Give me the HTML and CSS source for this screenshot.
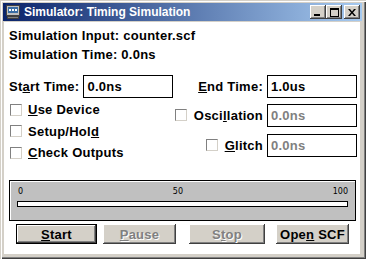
FILE: index.html
```html
<!DOCTYPE html>
<html lang="en">
<head>
    <meta charset="UTF-8">
    <title>Simulator: Timing Simulation</title>
    <link rel="stylesheet" href="styles.css">
</head>
<body>
    <div class="window">
        <div class="titlebar">
            <svg class="app-icon" width="16" height="16" viewBox="0 0 16 16">
                <rect x="1.5" y="1.5" width="13" height="10" fill="#c0c0c0" stroke="#404040"/>
                <rect x="3" y="3" width="10" height="6" fill="#3a6ea5"/>
                <rect x="4" y="5" width="2" height="2" fill="#fff"/>
                <rect x="7" y="5" width="2" height="2" fill="#fff"/>
                <rect x="10" y="5" width="2" height="2" fill="#fff"/>
                <rect x="2.5" y="12.5" width="11" height="2" fill="#808080" stroke="#404040"/>
            </svg>
            <span class="title">Simulator: Timing Simulation</span>
            <div class="caption-btns">
                <span class="cap-btn"><svg width="8" height="7"><rect x="0" y="5" width="6" height="2" fill="#000"/></svg></span>
                <span class="cap-btn"><svg width="9" height="9"><rect x="0.5" y="0.5" width="8" height="8" fill="none" stroke="#000"/><rect x="0" y="0" width="9" height="2" fill="#000"/></svg></span>
                <span class="cap-btn close-btn"><svg width="8" height="7"><path d="M0 0h2l2 2.5L6 0h2L5 3.5 8 7H6L4 4.5 2 7H0l3-3.5z" fill="#000"/></svg></span>
            </div>
        </div>

        <div class="client">
            <p class="info">Simulation Input: counter.scf</p>
            <p class="info">Simulation Time: 0.0ns</p>

            <div class="time-row">
                <label class="field">St<u>a</u>rt Time: <span class="box">0.0ns</span></label>
                <label class="field"><u>E</u>nd Time: <span class="box">1.0us</span></label>
            </div>

            <div class="options">
                <div class="opt-left">
                    <label class="check"><span class="cb"></span><u>U</u>se Device</label>
                    <label class="check"><span class="cb"></span>Setup/Hol<u>d</u></label>
                    <label class="check"><span class="cb"></span><u>C</u>heck Outputs</label>
                </div>
                <div class="opt-right">
                    <label class="check"><span class="cb"></span>Osci<u>l</u>lation <span class="box disabled">0.0ns</span></label>
                    <label class="check"><span class="cb"></span><u>G</u>litch <span class="box disabled">0.0ns</span></label>
                </div>
            </div>

            <div class="progress-group">
                <div class="scale">
                    <span>0</span>
                    <span>50</span>
                    <span>100</span>
                </div>
                <div class="bar"></div>
            </div>

            <div class="buttons">
                <button class="btn default btn-start"><u>S</u>tart</button>
                <button class="btn btn-pause" disabled><u>P</u>ause</button>
                <button class="btn btn-stop" disabled>S<u>t</u>op</button>
                <button class="btn btn-open">Ope<u>n</u> SCF</button>
            </div>
        </div>
    </div>
</body>
</html>
```
FILE: styles.css
```css
body {
    margin: 0;
    background-color: #d4d0c8;
    font-family: "Liberation Sans", Arial, sans-serif;
    font-size: 13px;
    font-weight: bold;
    letter-spacing: 0.25px;
}

.window {
    width: 366px;
    height: 259px;
    box-sizing: border-box;
    padding: 3px 4px 5px 3px;
    display: flex;
    flex-direction: column;
    background-color: #d4d0c8;
    box-shadow: inset 1px 1px #d4d0c8, inset 2px 2px #fff, inset -1px -1px #404040, inset -2px -2px #808080;
}

.titlebar {
    height: 18px;
    display: flex;
    align-items: center;
    padding: 0 2px 0 2px;
    background: linear-gradient(to right, #0a246a, #a6caf0);
    color: #fff;
}

.app-icon {
    margin-right: 3px;
}

.title {
    font-size: 12px;
    letter-spacing: 0;
}

.caption-btns {
    margin-left: auto;
    display: flex;
}

.cap-btn {
    width: 16px;
    height: 14px;
    display: flex;
    align-items: center;
    justify-content: center;
    background-color: #d4d0c8;
    box-shadow: inset -1px -1px #404040, inset 1px 1px #fff, inset -2px -2px #808080;
}

.close-btn {
    margin-left: 2px;
}

.client {
    flex: 1;
    margin: 1px 2px 0 1px;
    padding: 0 0 0 5px;
    background-color: #fff;
}

.info {
    margin: 0;
    height: 19px;
    line-height: 19px;
}

.info:first-child {
    margin-top: 4px;
}

.time-row {
    margin-top: 11px;
    display: flex;
    justify-content: space-between;
    padding-right: 3px;
}

.field {
    display: flex;
    align-items: center;
}

.box {
    width: 90px;
    height: 23px;
    box-sizing: border-box;
    border: 1px solid #000;
    padding: 0 3px;
    margin-left: 4px;
    line-height: 21px;
    color: #000;
    background-color: #fff;
}

.box.disabled {
    color: #808080;
}

.options {
    display: flex;
    justify-content: space-between;
    padding-right: 3px;
}

.opt-left {
    display: flex;
    flex-direction: column;
    padding-top: 5px;
    gap: 8.5px;
}

.opt-right {
    display: flex;
    flex-direction: column;
    align-items: flex-end;
    padding-top: 5px;
    gap: 6px;
}

.check {
    display: flex;
    align-items: center;
    height: 13px;
}

.opt-right .check {
    height: 24px;
}

.cb {
    width: 12px;
    height: 12px;
    box-sizing: border-box;
    border-top: 1px solid #808080;
    border-left: 1px solid #808080;
    border-bottom: 1px solid #d4d0c8;
    border-right: 1px solid #d4d0c8;
    background-color: #fff;
    margin: 0 6px 0 1px;
}

.opt-right .cb {
    margin-right: 7px;
}

.progress-group {
    margin: 21px 4px 0 0;
    height: 41px;
    box-sizing: border-box;
    border: 1px solid #000;
    background-color: #c0c0c0;
    box-shadow: inset 1px 1px #fff;
    padding: 6px 7px 0 7px;
}

.scale {
    display: flex;
    justify-content: space-between;
    font-family: "DejaVu Sans", sans-serif;
    font-size: 8px;
    font-weight: normal;
    letter-spacing: 0;
    height: 10px;
    line-height: 10px;
    padding: 0 0 0 1px;
}

.bar {
    margin-top: 4px;
    height: 6px;
    box-sizing: border-box;
    border: 1px solid #000;
    background-color: #fff;
}

.buttons {
    display: flex;
    margin-top: 3px;
    padding-left: 7px;
}

.btn {
    height: 20px;
    padding: 0;
    border: none;
    font-family: "Liberation Sans", Arial, sans-serif;
    font-size: 13px;
    font-weight: bold;
    letter-spacing: 0.25px;
    color: #000;
    background-color: #d4d0c8;
    box-shadow: inset -1px -1px #404040, inset 1px 1px #fff, inset -2px -2px #808080;
}

.btn.default {
    border: 1px solid #000;
}

.btn:disabled {
    color: #808080;
    text-shadow: 1px 1px #fff;
}

.btn-start {
    width: 81px;
}

.btn-pause {
    width: 73px;
    margin-left: 6px;
}

.btn-stop {
    width: 76px;
    margin-left: 13px;
}

.btn-open {
    width: 73px;
    margin-left: 11px;
}
```
